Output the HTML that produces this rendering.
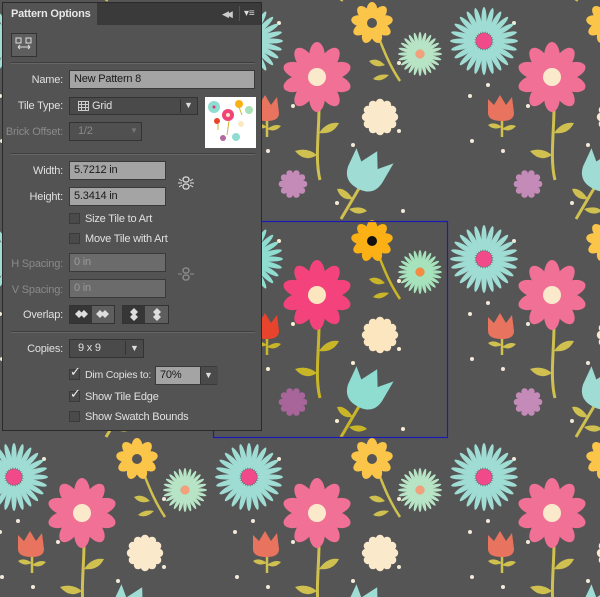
<!DOCTYPE html>
<html><head><meta charset="utf-8"><style>
html,body{margin:0;width:600px;height:597px;overflow:hidden;}
body{background:#555555;font-family:"Liberation Sans",Arial,sans-serif;font-size:11px;letter-spacing:-0.2px}
#bg{position:absolute;left:0;top:0}
.p{position:absolute;left:2px;top:2px;width:258px;height:427px;background:#535353;border:1px solid #2a2a2a;}
.tb{position:absolute;left:0;top:0;width:258px;height:22px;background:#3a3a3a;}
.tab{position:absolute;left:0;top:0;width:94px;height:22px;background:#535353;color:#e8e8e8;font-weight:bold;line-height:22px;padding-left:8px;box-sizing:border-box}
.a{position:absolute;}
.l{position:absolute;color:#e0e0e0;text-align:right;width:60px;left:0}
.d{color:#8a8a8a}
.f{position:absolute;background:#a4a4a4;border:1px solid #3a3a3a;box-sizing:border-box;color:#1a1a1a;padding-left:4px;line-height:16px}
.dd{position:absolute;background:#4a4a4a;border:1px solid #333;box-sizing:border-box;color:#e0e0e0;line-height:16px;padding-left:8px}
.sep{position:absolute;left:8px;width:244px;height:1px;background:#3e3e3e;border-bottom:1px solid #666}
.cb{position:absolute;width:11px;height:11px;background:#4a4a4a;border:1px solid #3a3a3a;box-sizing:border-box}
.ct{position:absolute;color:#e0e0e0}
</style></head><body>
<svg id="bg" width="600" height="597"></svg>
<div class="p">
<div class="tb"><div class="tab">Pattern Options</div>
<div class="a" style="left:219px;top:6px;color:#ccc;font-size:9px;letter-spacing:-3px">◀◀</div>
<div class="a" style="left:236px;top:3px;width:1px;height:15px;background:#555"></div>
<div class="a" style="left:241px;top:5px;color:#ddd;font-size:10px">▾≡</div></div>
<div class="a" style="left:8px;top:30px;width:26px;height:24px;background:#5e5e5e;border:1px solid #333;box-sizing:border-box">
<svg width="24" height="22"><rect x="4" y="4" width="5" height="5" fill="none" stroke="#ddd"/><rect x="14" y="4" width="5" height="5" fill="none" stroke="#ddd"/><path d="M6 13h12M6 13l2-2M6 13l2 2M18 13l-2-2M18 13l-2 2" stroke="#ddd" fill="none"/></svg></div>
<div class="sep" style="top:59px"></div>
<div class="l" style="top:71px">Name:</div><div class="f" style="left:66px;top:67px;width:186px;height:19px">New Pattern 8</div>
<div class="l" style="top:97px">Tile Type:</div><div class="dd" style="left:66px;top:94px;width:129px;height:18px;padding-left:22px">Grid</div>
<svg class="a" style="left:75px;top:98px" width="11" height="10"><path d="M.5 .5h10v9h-10zM.5 3.5h10M.5 6.5h10M3.5 .5v9M7.5 .5v9" stroke="#ccc" fill="none"/></svg>
<div class="a" style="left:177px;top:96px;width:1px;height:14px;background:#333"></div><div class="a" style="left:181px;top:97px;color:#ddd;font-size:9px">▼</div>
<div class="l d" style="top:123px">Brick Offset:</div><div class="dd" style="left:66px;top:119px;width:73px;height:19px;color:#8a8a8a;background:#505050">1/2</div><div class="a" style="left:127px;top:123px;color:#777;font-size:8px">▼</div>
<svg class="a" style="left:202px;top:94px" width="51" height="51"><rect width="51" height="51" fill="#fff"/><circle cx="9" cy="10" r="6" fill="#8fdcd0"/><circle cx="9" cy="10" r="1.5" fill="#e0307a"/><circle cx="23" cy="18" r="6" fill="#f0437a"/><circle cx="23" cy="18" r="2" fill="#fde8c0"/><circle cx="34" cy="7" r="4" fill="#fbb116"/><circle cx="44" cy="13" r="4" fill="#a8e0b8"/><circle cx="36" cy="27" r="3" fill="#fde8c0"/><circle cx="12" cy="24" r="3" fill="#e8442c"/><circle cx="18" cy="41" r="3" fill="#b06aa0"/><circle cx="31" cy="40" r="4" fill="#8fdcd0"/><path d="M24 24l-2 14M13 27v6M34 10l3 8" stroke="#c8b830"/></svg>
<div class="sep" style="top:150px"></div>
<div class="l" style="top:162px">Width:</div><div class="f" style="left:66px;top:158px;width:97px;height:19px">5.7212 in</div>
<div class="l" style="top:188px">Height:</div><div class="f" style="left:66px;top:184px;width:97px;height:19px">5.3414 in</div>
<svg class="a" style="left:174px;top:171px" width="18" height="18"><rect x="6" y="3" width="6" height="5" rx="2.5" fill="none" stroke="#ddd" stroke-width="1.3"/><rect x="6" y="10" width="6" height="5" rx="2.5" fill="none" stroke="#ddd" stroke-width="1.3"/><path d="M1 9h4M13 9h4M2 5l3 2M16 5l-3 2M2 13l3-2M16 13l-3-2" stroke="#ddd"/></svg>
<div class="cb" style="left:66px;top:210px"></div><div class="ct" style="left:82px;top:210px">Size Tile to Art</div>
<div class="cb" style="left:66px;top:230px"></div><div class="ct" style="left:82px;top:230px">Move Tile with Art</div>
<div class="l d" style="top:255px">H Spacing:</div><div class="f" style="left:66px;top:250px;width:97px;height:19px;background:#6b6b6b;color:#999">0 in</div>
<div class="l d" style="top:281px">V Spacing:</div><div class="f" style="left:66px;top:276px;width:97px;height:19px;background:#6b6b6b;color:#999">0 in</div>
<svg class="a" style="left:174px;top:262px" width="18" height="18" opacity=".45"><rect x="6" y="3" width="6" height="5" rx="2.5" fill="none" stroke="#ddd" stroke-width="1.3"/><rect x="6" y="10" width="6" height="5" rx="2.5" fill="none" stroke="#ddd" stroke-width="1.3"/><path d="M1 9h4M13 9h4" stroke="#ddd"/></svg>
<div class="l" style="top:306px">Overlap:</div>
<div class="a" style="left:66px;top:302px;width:46px;height:19px;border:1px solid #333;box-sizing:border-box;background:#5e5e5e"><div style="position:absolute;left:0;top:0;width:22px;height:17px;background:#363636"></div>
<svg style="position:absolute;left:0;top:0" width="44" height="17"><path d="M5 8l4-4 4 4-4 4zM10 8l4-4 4 4-4 4z" fill="#ddd"/><path d="M26 8l4-4 4 4-4 4zM31 8l4-4 4 4-4 4z" fill="#ddd"/></svg></div>
<div class="a" style="left:119px;top:302px;width:47px;height:19px;border:1px solid #333;box-sizing:border-box;background:#5e5e5e"><div style="position:absolute;left:0;top:0;width:22px;height:17px;background:#363636"></div>
<svg style="position:absolute;left:0;top:0" width="45" height="17"><path d="M11 2l4 4-4 4-4-4zM11 7l4 4-4 4-4-4z" fill="#ddd"/><path d="M34 2l4 4-4 4-4-4zM34 7l4 4-4 4-4-4z" fill="#ddd"/></svg></div>
<div class="sep" style="top:328px"></div>
<div class="l" style="top:340px">Copies:</div><div class="dd" style="left:66px;top:336px;width:75px;height:19px">9 x 9</div><div class="a" style="left:122px;top:338px;width:1px;height:14px;background:#333"></div><div class="a" style="left:127px;top:340px;color:#ddd;font-size:9px">▼</div>
<div class="cb" style="left:66px;top:366px"></div><div class="a" style="left:67px;top:361px;color:#eee;font-size:13px">✓</div><div class="ct" style="left:82px;top:366px;font-size:10.5px">Dim Copies to:</div>
<div class="f" style="left:152px;top:363px;width:62px;height:19px">70%</div><div class="a" style="left:197px;top:364px;width:17px;height:17px;background:#4a4a4a;border-left:1px solid #333"></div><div class="a" style="left:201px;top:367px;color:#ddd;font-size:9px">▼</div>
<div class="cb" style="left:66px;top:388px"></div><div class="a" style="left:67px;top:383px;color:#eee;font-size:13px">✓</div><div class="ct" style="left:82px;top:388px">Show Tile Edge</div>
<div class="cb" style="left:66px;top:408px"></div><div class="ct" style="left:82px;top:408px">Show Swatch Bounds</div>
</div>
<script>
function petals(n,rx,ry,cy){let s='';for(let i=0;i<n;i++)s+=`<ellipse cx="0" cy="${cy}" rx="${rx}" ry="${ry}" transform="rotate(${i*360/n})"/>`;return s;}
function scallop(r,n){let s=`<circle r="${r}"/>`;for(let i=0;i<n;i++){let a=i*2*Math.PI/n;s+=`<circle cx="${(r*Math.cos(a)).toFixed(1)}" cy="${(r*Math.sin(a)).toFixed(1)}" r="${(r*0.3).toFixed(1)}"/>`;}return s;}
const dots=[[66,20],[40,82],[22,93],[80,103],[24,138],[55,148],[124,200],[186,60],[186,128],[140,142],[190,208]];
function tile(c){
 let s='';
 s+=`<g fill="${c.dot}">`+dots.map(d=>`<circle cx="${d[0]}" cy="${d[1]}" r="2"/>`).join('')+'</g>';
 s+=`<g transform="translate(36,38)" fill="${c.cyan}">${petals(24,2.6,13,-21)}<circle r="8" fill="${c.pc}"/></g>`;
 s+=`<g transform="translate(207,51)" fill="${c.green}">${petals(24,1.8,9,-13)}<circle r="4.5" fill="${c.or}"/></g>`;
 s+=`<path d="M104 80 C110 110 100 150 107 177" stroke="${c.stem}" stroke-width="3" fill="none"/>`;
 s+=`<path d="M106 130 Q114 118 126 120 Q120 132 106 130z M104 152 Q94 144 82 148 Q92 160 104 152z" fill="${c.stem}"/>`;
 s+=`<g transform="translate(104,74)" fill="${c.pink}">${petals(10,8,15,-20)}<circle r="9" fill="${c.cream}"/></g>`;
 s+=`<path d="M163 28 C170 45 175 60 187 78" stroke="${c.stem}" stroke-width="2.5" fill="none"/>`;
 s+=`<path d="M172 62 Q164 54 156 58 Q162 66 172 62z M176 72 Q166 70 160 76 Q168 80 176 72z" fill="${c.stem}"/>`;
 s+=`<g transform="translate(159,20)" fill="${c.yel}">${petals(9,5.5,9,-12)}<circle r="5" fill="${c.ctr}"/></g>`;
 s+=`<g transform="translate(167,114)" fill="${c.cream}">${scallop(14,12)}</g>`;
 s+=`<g transform="translate(80,181)" fill="${c.pur}">${scallop(11,10)}</g>`;
 s+=`<path d="M54 112 v22" stroke="${c.stem}" stroke-width="2.5"/><path d="M54 124 Q46 118 40 122 Q46 128 54 124z M54 126 Q62 120 68 123 Q62 130 54 126z" fill="${c.stem}"/>`;
 s+=`<path d="M40 96 L46 102 L52 92 L58 102 L64 94 L66 110 Q66 118 54 118 Q40 118 40 110z" fill="${c.red}"/>`;
 s+=`<path d="M148 182 L128 216" stroke="${c.stem}" stroke-width="3"/><path d="M140 196 Q132 184 124 186 Q128 198 140 196z M136 206 Q148 202 154 208 Q144 214 136 206z" fill="${c.stem}"/>`;
 s+=`<g transform="translate(154,170) rotate(25)"><path d="M-20 -18 L-10 -8 L0 -24 L8 -8 L20 -20 L18 2 Q16 18 0 18 Q-18 18 -20 2z" fill="${c.cyan}"/></g>`;
 return s;
}
const main={dot:'#fbeed2',cyan:'#8fdcd0',pc:'#ee3a7e',green:'#a6e2bc',or:'#f58a40',stem:'#c9b628',pink:'#f4437c',cream:'#fbe6c0',yel:'#fbb116',ctr:'#111',pur:'#a8659a',red:'#e8432c'};
const dim={dot:'#f3ead8',cyan:'#9edcd4',pc:'#f04a8a',green:'#b8e4c6',or:'#f4a07a',stem:'#cfc050',pink:'#f07096',cream:'#fbe9cc',yel:'#fbc54a',ctr:'#555',pur:'#c48ab8',red:'#e8735e'};
let out='';
const ox=[-257,-22,213,448,683],oy=[-215,3,221,439];
for(const y of oy)for(const x of ox){if(x===213&&y===221)continue;out+=`<g transform="translate(${x},${y})">${tile(dim)}</g>`;}
out+=`<g transform="translate(213,221)">${tile(main)}</g>`;
out+=`<rect x="213.5" y="221.5" width="234" height="216" fill="none" stroke="#1a1ab8" stroke-width="1.2"/>`;
document.getElementById('bg').innerHTML=out;
</script>
</body></html>
